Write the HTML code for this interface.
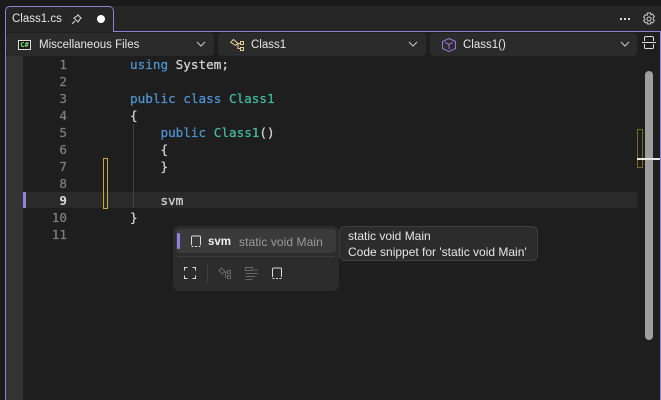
<!DOCTYPE html>
<html><head><meta charset="utf-8">
<style>
html,body{margin:0;padding:0;background:#1e1e1e}
#r{position:relative;width:661px;height:400px;overflow:hidden;background:#1e1e1e;font-family:"Liberation Sans",sans-serif;color:#e6e6e6}
#r div,#r svg,#r span.a{position:absolute}
.t{white-space:nowrap;font-size:12px;line-height:16px}
.h{font-size:11.5px}
.c{font-family:"DejaVu Sans Mono",monospace;font-size:12.65px;line-height:17px;white-space:pre;left:130px;color:#d4d4d4;-webkit-text-stroke:.25px currentColor}
.n{font-family:"DejaVu Sans Mono",monospace;font-size:12.65px;line-height:17px;width:67px;left:0;text-align:right;color:#7f7f7f;-webkit-text-stroke:.2px currentColor}
.k{color:#4f93d0}.g{color:#45b89f}
.b{background:#2b2b2b;border-radius:4px;top:33px;height:23px}
</style></head><body>
<div id="r">
<div style="left:0;top:0;width:661px;height:6px;background:#1a1a1a"></div>
<div style="left:0;top:6px;width:5px;height:394px;background:#1a1a1a"></div>
<div style="left:5px;top:6px;width:656px;height:25px;background:#262626"></div>
<div style="left:5px;top:31px;width:656px;height:369px;background:#1e1e1e"></div>
<div style="left:113px;top:31px;width:548px;height:1px;background:#8f80d8"></div>
<div style="left:5px;top:31px;width:1px;height:369px;background:#8f80d8"></div>
<div style="left:660px;top:31px;width:1px;height:369px;background:#8f80d8"></div>
<div style="left:5px;top:6px;width:109px;height:26px;box-sizing:border-box;border:1px solid #8f80d8;border-bottom:0;border-radius:5px 5px 0 0;background:#262626"></div>
<div class="t h" style="left:12px;top:11px">Class1.cs</div>
<svg style="left:71px;top:13px" width="12" height="12" viewBox="0 0 12 12" fill="none" stroke="#ddd"><path d="M1 11L4 8M6.500 1.500L10.500 5.500M7.500 2L3 5L7 9L10 4.500"/></svg>
<div style="left:97px;top:15px;width:8px;height:8px;border-radius:50%;background:#fff"></div>
<div style="left:620px;top:18px;width:2px;height:2px;background:#ddd;box-shadow:4px 0 #ddd,8px 0 #ddd"></div>
<svg style="left:642px;top:12px" width="14" height="14" viewBox="0 0 14 14" fill="none" stroke="#ccc"><circle cx="7" cy="7" r="2"/><path d="M5.500 1h3l.4 1.800 1.700-.7 1.800 2.400-1.200 1.300v1.400l1.200 1.300-1.800 2.400-1.700-.7-.4 1.800h-3l-.4-1.800-1.700.7-1.800-2.400L2.800 7.700V6.300L1.600 5l1.800-2.400 1.700.7z"/></svg>

<div class="b" style="left:6px;width:208px"></div>
<div class="b" style="left:218px;width:208px"></div>
<div class="b" style="left:430px;width:207px"></div>
<div style="left:18px;top:40px;width:13px;height:10px;box-sizing:border-box;border:1px solid #ddd;background:#1a1a1a"></div>
<div style="left:18px;top:41px;width:13px;font:bold 7px/8px 'DejaVu Sans Mono',monospace;color:#6fe86f;text-align:center">C#</div>
<div class="t h" style="left:39px;top:37px">Miscellaneous Files</div>
<svg style="left:196px;top:41px" width="10" height="7" viewBox="0 0 10 7" fill="none" stroke="#ccc"><path d="M1 1l4 4 4-4"/></svg>
<svg style="left:230px;top:38px" width="15" height="14" viewBox="0 0 15 14" fill="none" stroke="#e8cf94"><path d="M.7 4.300L3.500 1.500L7.700 5.300L5.500 7.500ZM7 5.500H10.500M8 5.500V10.500H10.500"/><rect x="10.500" y="3.500" width="3" height="3"/><rect x="10.500" y="9.500" width="3" height="3"/></svg>
<div class="t h" style="left:251px;top:37px">Class1</div>
<svg style="left:408px;top:41px" width="10" height="7" viewBox="0 0 10 7" fill="none" stroke="#ccc"><path d="M1 1l4 4 4-4"/></svg>
<svg style="left:441px;top:37px" width="16" height="16" viewBox="0 0 16 16" fill="none" stroke="#9a77d8"><path d="M8 1.500L14.500 4.500V11.500L8 14.500L1.500 11.500V4.500ZM4 5.500L8 7.500L12 5.500M8 7.500V12"/></svg>
<div class="t h" style="left:463px;top:37px">Class1()</div>
<svg style="left:620px;top:41px" width="10" height="7" viewBox="0 0 10 7" fill="none" stroke="#ccc"><path d="M1 1l4 4 4-4"/></svg>
<svg style="left:642px;top:35px" width="14" height="15" viewBox="0 0 14 15" fill="none" stroke="#ddd"><path d="M2.500 6V3a1.500 1.500 0 0 1 1.500-1.500h6A1.500 1.500 0 0 1 11.500 3v3M0 7.500h14M2.500 9v3.500a1 1 0 0 0 1 1h7a1 1 0 0 0 1-1V9"/></svg>

<div style="left:6px;top:56px;width:17px;height:344px;background:#333"></div>
<div style="left:23px;top:192px;width:614px;height:16px;background:#2a2a2a"></div>
<div style="left:23px;top:192px;width:3px;height:16px;background:#9080e0"></div>
<div style="left:133px;top:124px;width:1px;height:84px;background:#404040"></div>
<div style="left:103px;top:158px;width:5px;height:51px;box-sizing:border-box;border:1px solid #c9a93a"></div>

<div class="n" style="top:56px">1</div>
<div class="n" style="top:73px">2</div>
<div class="n" style="top:90px">3</div>
<div class="n" style="top:107px">4</div>
<div class="n" style="top:124px">5</div>
<div class="n" style="top:141px">6</div>
<div class="n" style="top:158px">7</div>
<div class="n" style="top:175px">8</div>
<div class="n" style="top:192px;color:#dcdcdc;font-weight:bold;-webkit-text-stroke:0">9</div>
<div class="n" style="top:209px">10</div>
<div class="n" style="top:226px">11</div>

<div class="c" style="top:56px"><span class="k">using</span> System;</div>
<div class="c" style="top:90px"><span class="k">public class</span> <span class="g">Class1</span></div>
<div class="c" style="top:107px">{</div>
<div class="c" style="top:124px">    <span class="k">public</span> <span class="g">Class1</span>()</div>
<div class="c" style="top:141px">    {</div>
<div class="c" style="top:158px">    }</div>
<div class="c" style="top:192px">    svm</div>
<div class="c" style="top:209px">}</div>

<div style="left:645px;top:71px;width:8px;height:269px;border-radius:4px;background:#9e9e9e"></div>
<div style="left:637px;top:129px;width:6px;height:39px;box-sizing:border-box;border:1.5px solid #7a6a20"></div>
<div style="left:637px;top:158px;width:23px;height:2px;background:#e8e8e8"></div>

<div style="left:173px;top:226px;width:166px;height:65px;background:#2c2c2c;border-radius:6px"></div>
<div style="left:176px;top:229px;width:160px;height:24px;background:#3a3a3a;border-radius:4px"></div>
<div style="left:177px;top:233px;width:3px;height:16px;background:#9080e0;border-radius:1px"></div>
<svg style="left:190px;top:235px" width="12" height="13" viewBox="0 0 12 13" fill="none" stroke="#ddd"><path d="M1.500 10V2a1 1 0 0 1 1-1h7a1 1 0 0 1 1 1v8M1.500 11.500h2M5 11.500h2M8.500 11.500h2"/></svg>
<div class="t" style="left:208px;top:234px;font-size:11.500px;font-weight:bold;color:#f0f0f0">svm</div>
<div class="t" style="left:239px;top:234px;color:#9a9a9a;letter-spacing:.07px">static void Main</div>
<div style="left:177px;top:256px;width:158px;height:1px;background:#3c3c3c"></div>
<svg style="left:184px;top:267px" width="12" height="12" viewBox="0 0 12 12" fill="none" stroke="#ddd"><path d="M.5 3.500V.5h3M8.500.5h3v3M11.500 8.500v3h-3M3.500 11.500h-3v-3"/></svg>
<div style="left:207px;top:265px;width:1px;height:18px;background:#3f3f3f"></div>
<svg style="left:218px;top:267px" width="14" height="13" viewBox="0 0 14 13" fill="none" stroke="#666"><path d="M1 3.500L3.500 1L7 4.500L4.500 7ZM6 5H9.500M7.500 5V10H9.500"/><rect x="9.500" y="3.500" width="3" height="3"/><rect x="9.500" y="8.500" width="3" height="3"/></svg>
<svg style="left:245px;top:267px" width="13" height="13" viewBox="0 0 13 13" fill="none" stroke="#666"><path d="M.5.5h7v3h-7zM.5 6.500h12M9 3h3.500M.5 9.500h10M.5 12.500h7"/></svg>
<svg style="left:271px;top:267px" width="12" height="13" viewBox="0 0 12 13" fill="none" stroke="#ddd"><path d="M1.500 10V2a1 1 0 0 1 1-1h7a1 1 0 0 1 1 1v8M1.500 11.500h2M5 11.500h2M8.500 11.500h2"/></svg>

<div style="left:339px;top:226px;width:199px;height:35px;box-sizing:border-box;background:#2c2c2c;border:1px solid #3e3e3e;border-radius:6px"></div>
<div class="t" style="left:348px;top:228px">static void Main</div>
<div class="t" style="left:348px;top:244px">Code snippet for 'static void Main'</div>
</div>
</body></html>
